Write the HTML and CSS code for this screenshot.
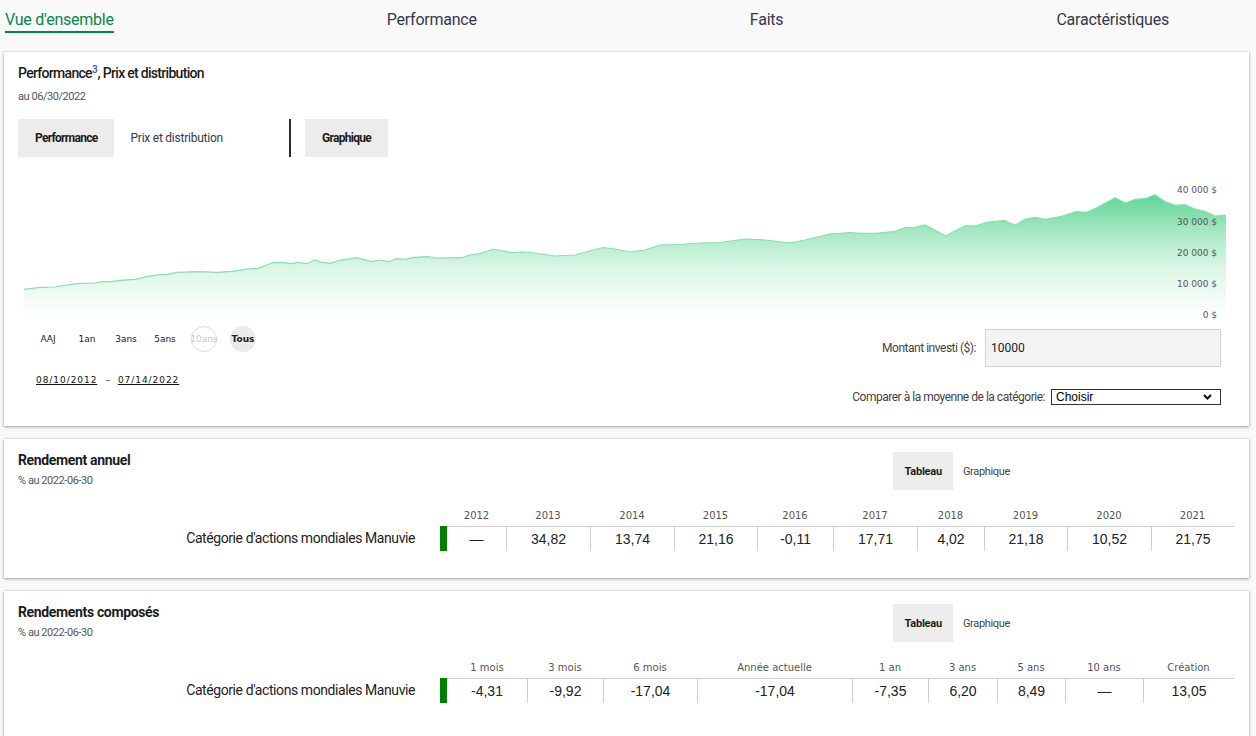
FILE: index.html
```html
<!DOCTYPE html>
<html lang="fr">
<head>
<meta charset="utf-8">
<title>Vue d'ensemble</title>
<link rel="stylesheet" href="styles.css">
</head>
<body>
<nav class="topnav">
  <a class="nav-item active" href="#">Vue d'ensemble</a>
  <a class="nav-item" href="#">Performance</a>
  <a class="nav-item" href="#">Faits</a>
  <a class="nav-item" href="#">Caractéristiques</a>
</nav>

<main class="cards">
  <section class="card perf-card">
    <h2 class="card-title medium">Performance<sup class="note">3</sup>, Prix et distribution</h2>
    <p class="card-sub first">au 06/30/2022</p>

    <div class="tab-row">
      <div class="seg">
        <button class="seg-btn active">Performance</button>
        <button class="seg-btn">Prix et distribution</button>
      </div>
      <span class="tab-divider"></span>
      <button class="seg-btn active">Graphique</button>
    </div>

    <svg class="chart" width="1216" height="162" viewBox="18 160 1216 162">
      <defs>
        <linearGradient id="fillg" gradientUnits="userSpaceOnUse" x1="0" y1="195" x2="0" y2="316">
          <stop offset="0" stop-color="#5fd496"/>
          <stop offset="0.3" stop-color="#a6e8c3"/>
          <stop offset="0.6" stop-color="#dbf6e6"/>
          <stop offset="1" stop-color="#ffffff"/>
        </linearGradient>
      </defs>
      <path class="area" fill="url(#fillg)" d="M24,289.3 L40,287.3 L55,287 L76.7,283.7 L95,283 L103,281.7 L111.7,281.7 L120,280.3 L135,279.3 L148,276.3 L160,274.7 L168,274.3 L176.7,272.3 L200,271.7 L216.7,272.3 L233,271.3 L245,269.3 L258,268.3 L266.7,265 L273,262.7 L281.7,262.3 L291.7,263.7 L298,262.3 L306.7,263.7 L315,260 L321.7,262.3 L330,263.3 L340,260.3 L356,257.7 L371.7,261.7 L380,260 L388.3,261.7 L396.7,258.7 L405,259.3 L413.3,257.3 L428.3,256.7 L436.7,258 L461.7,257.7 L470,255 L480,253.7 L493.3,249 L503.3,251 L511.7,252.7 L522.7,252 L535,253 L555,256 L575,255 L590,251 L603,247.5 L615,249 L630,252 L645,250 L660,245 L680,244.5 L700,243 L720,242.5 L745,239 L765,240 L790,243 L805,240 L830,234 L850,232.5 L860,233.3 L876.7,233.3 L895,231.3 L905,227.7 L915,227.3 L925,225 L945.7,236 L956.7,230 L966,225.7 L975,226 L986,222.7 L995,221.3 L1005,220.7 L1015,225.3 L1025,219.3 L1035,217.3 L1045,219.3 L1060,216.7 L1076,211.7 L1086.7,212.3 L1096.7,207.7 L1115,197.7 L1125.7,203 L1135,199.3 L1145,198.7 L1155,194.7 L1165.7,202 L1175.7,205.3 L1185,204.7 L1195,209 L1205,211.3 L1215,216 L1226,215 L1226,320 L24,320 Z"/>
      <path class="line" fill="none" stroke="#86e0b0" stroke-width="1.2" d="M24,289.3 L40,287.3 L55,287 L76.7,283.7 L95,283 L103,281.7 L111.7,281.7 L120,280.3 L135,279.3 L148,276.3 L160,274.7 L168,274.3 L176.7,272.3 L200,271.7 L216.7,272.3 L233,271.3 L245,269.3 L258,268.3 L266.7,265 L273,262.7 L281.7,262.3 L291.7,263.7 L298,262.3 L306.7,263.7 L315,260 L321.7,262.3 L330,263.3 L340,260.3 L356,257.7 L371.7,261.7 L380,260 L388.3,261.7 L396.7,258.7 L405,259.3 L413.3,257.3 L428.3,256.7 L436.7,258 L461.7,257.7 L470,255 L480,253.7 L493.3,249 L503.3,251 L511.7,252.7 L522.7,252 L535,253 L555,256 L575,255 L590,251 L603,247.5 L615,249 L630,252 L645,250 L660,245 L680,244.5 L700,243 L720,242.5 L745,239 L765,240 L790,243 L805,240 L830,234 L850,232.5 L860,233.3 L876.7,233.3 L895,231.3 L905,227.7 L915,227.3 L925,225 L945.7,236 L956.7,230 L966,225.7 L975,226 L986,222.7 L995,221.3 L1005,220.7 L1015,225.3 L1025,219.3 L1035,217.3 L1045,219.3 L1060,216.7 L1076,211.7 L1086.7,212.3 L1096.7,207.7 L1115,197.7 L1125.7,203 L1135,199.3 L1145,198.7 L1155,194.7 L1165.7,202 L1175.7,205.3 L1185,204.7 L1195,209 L1205,211.3 L1215,216 L1226,215"/>
      <g class="axis">
        <text x="1217" y="193">40 000 $</text>
        <text x="1217" y="225">30 000 $</text>
        <text x="1217" y="256">20 000 $</text>
        <text x="1217" y="287">10 000 $</text>
        <text x="1217" y="318">0 $</text>
      </g>
    </svg>

    <div class="controls">
      <div class="range">
        <div class="range-btns">
          <button class="rbtn">AAJ</button>
          <button class="rbtn">1an</button>
          <button class="rbtn">3ans</button>
          <button class="rbtn">5ans</button>
          <button class="rbtn disabled">10ans</button>
          <button class="rbtn selected">Tous</button>
        </div>
        <div class="dates">
          <span class="date">08/10/2012</span>
          <span class="dash">–</span>
          <span class="date">07/14/2022</span>
        </div>
      </div>
      <div class="calc">
        <div class="field-row">
          <label class="field-label" for="amt">Montant investi ($):</label>
          <input id="amt" class="amount" type="text" value="10000">
        </div>
        <div class="field-row tight">
          <label class="field-label" for="cmp">Comparer à la moyenne de la catégorie:</label>
          <span class="select-wrap">
            <select id="cmp" class="select"><option>Choisir</option></select>
            <svg class="chev" width="9" height="6" viewBox="0 0 9 6"><path d="M1 1 L4.5 4.5 L8 1" fill="none" stroke="#111" stroke-width="2"/></svg>
          </span>
        </div>
      </div>
    </div>
  </section>

  <section class="card">
    <div class="card-head">
      <div class="head-text">
        <h2 class="card-title">Rendement annuel</h2>
        <p class="card-sub">% au 2022-06-30</p>
      </div>
      <div class="toggle">
        <button class="seg-btn small active">Tableau</button>
        <button class="seg-btn small">Graphique</button>
      </div>
    </div>
    <div class="ret-table annual">
      <span></span><span></span>
      <span class="th">2012</span><span class="th">2013</span><span class="th">2014</span><span class="th">2015</span><span class="th">2016</span><span class="th">2017</span><span class="th">2018</span><span class="th">2019</span><span class="th">2020</span><span class="th">2021</span>
      <span class="row-label">Catégorie d'actions mondiales Manuvie</span><span class="bar"></span>
      <span class="td first">—</span><span class="td">34,82</span><span class="td">13,74</span><span class="td">21,16</span><span class="td">-0,11</span><span class="td">17,71</span><span class="td">4,02</span><span class="td">21,18</span><span class="td">10,52</span><span class="td">21,75</span>
    </div>
  </section>

  <section class="card last">
    <div class="card-head">
      <div class="head-text">
        <h2 class="card-title">Rendements composés</h2>
        <p class="card-sub">% au 2022-06-30</p>
      </div>
      <div class="toggle">
        <button class="seg-btn small active">Tableau</button>
        <button class="seg-btn small">Graphique</button>
      </div>
    </div>
    <div class="ret-table compound">
      <span></span><span></span>
      <span class="th">1 mois</span><span class="th">3 mois</span><span class="th">6 mois</span><span class="th">Année actuelle</span><span class="th">1 an</span><span class="th">3 ans</span><span class="th">5 ans</span><span class="th">10 ans</span><span class="th">Création</span>
      <span class="row-label">Catégorie d'actions mondiales Manuvie</span><span class="bar"></span>
      <span class="td first">-4,31</span><span class="td">-9,92</span><span class="td">-17,04</span><span class="td">-17,04</span><span class="td">-7,35</span><span class="td">6,20</span><span class="td">8,49</span><span class="td">—</span><span class="td">13,05</span>
    </div>
  </section>
</main>
</body>
</html>
```

FILE: styles.css
```css
* {
  box-sizing: border-box;
  margin: 0;
  padding: 0;
}

body {
  width: 1256px;
  background: #f9f9f9;
  font-family: Roboto, "Liberation Sans", sans-serif;
  color: #222;
}

/* top navigation */
.topnav {
  display: flex;
  justify-content: space-between;
  width: 1169px;
  padding: 11px 0 0 5px;
}

.nav-item {
  font-size: 16px;
  line-height: 18px;
  letter-spacing: -0.015em;
  color: #34384b;
  text-decoration: none;
  padding-bottom: 2px;
  border-bottom: 2px solid transparent;
}

.nav-item.active {
  color: #06874e;
  border-bottom-color: #00874a;
}

/* cards */
.cards {
  display: flex;
  flex-direction: column;
  gap: 13px;
  width: 1245px;
  margin: 19px 0 0 4px;
}

.card {
  background: #fff;
  box-shadow: 0 1px 3px rgba(0, 0, 0, 0.35), 0 0 1px rgba(0, 0, 0, 0.25);
  padding: 12px 15px 27px 14px;
}

.perf-card {
  padding-bottom: 21px;
}

.card.last {
  padding-bottom: 40px;
}

.card-title {
  font-size: 14px;
  line-height: 18px;
  font-weight: 700;
  letter-spacing: -0.025em;
  color: #1c1c1c;
}

.card-title.medium {
  font-weight: 500;
  letter-spacing: -0.05em;
}

.note {
  font-size: 10px;
  line-height: 0;
  vertical-align: 5px;
  color: #3b4cf0;
  letter-spacing: 0;
}

.card-sub {
  margin-top: 5px;
  font-size: 11px;
  line-height: 14px;
  letter-spacing: -0.04em;
  color: #555;
}

.card-sub.first {
  margin-top: 8px;
}

/* tabs */
.tab-row {
  display: flex;
  height: 38px;
  margin-top: 15px;
}

.seg {
  display: flex;
  width: 271px;
}

.seg-btn {
  height: 38px;
  padding: 0 16px;
  border: 0;
  background: transparent;
  font-family: Roboto, "Liberation Sans", sans-serif;
  font-size: 12px;
  letter-spacing: -0.02em;
  color: #34384b;
  cursor: pointer;
}

.seg-btn.active {
  padding: 0 17px;
  background: #ececec;
  font-weight: 700;
  letter-spacing: -0.06em;
  color: #1c1c1c;
}

.tab-divider {
  width: 2px;
  margin-right: 14px;
  background: #282b3e;
}

/* chart */
.chart {
  display: block;
  margin-top: 3px;
}

.axis text {
  font-family: "DejaVu Sans", Verdana, sans-serif;
  font-size: 9px;
  fill: #555;
  text-anchor: end;
}

/* controls under chart */
.controls {
  display: flex;
  justify-content: space-between;
  margin-top: 4px;
}

.range-btns {
  display: flex;
  gap: 13px;
  margin-left: 17px;
}

.rbtn {
  width: 26px;
  height: 26px;
  border: 1px solid transparent;
  border-radius: 50%;
  background: transparent;
  font-family: "DejaVu Sans", Verdana, sans-serif;
  font-size: 9px;
  color: #222;
  white-space: nowrap;
  display: flex;
  align-items: center;
  justify-content: center;
  overflow: visible;
}

.rbtn.disabled {
  border-color: #dcdcdc;
  color: #c8c8c8;
}

.rbtn.selected {
  background: #ebebeb;
  font-weight: 700;
}

.dates {
  display: flex;
  margin: 22px 0 0 18px;
  font-family: "DejaVu Sans", Verdana, sans-serif;
  font-size: 9px;
  line-height: 12px;
  color: #111;
}

.date {
  text-decoration: underline;
  letter-spacing: 0.95px;
}

.dash {
  margin: 0 8px 0 8px;
}

.calc {
  display: flex;
  flex-direction: column;
  align-items: flex-end;
  gap: 22px;
  margin: 3px 13px 0 0;
}

.field-row {
  display: flex;
  align-items: center;
  gap: 9px;
}

.field-row.tight {
  gap: 6px;
}

.field-label {
  font-size: 12px;
  letter-spacing: -0.04em;
  color: #444;
}

.amount {
  width: 236px;
  height: 38px;
  padding-left: 5px;
  border: 1px solid #d4d4d4;
  background: #f3f3f3;
  font-family: Roboto, "Liberation Sans", sans-serif;
  font-size: 12px;
  color: #222;
  outline: none;
}

.select-wrap {
  position: relative;
  display: block;
}

.select {
  display: block;
  width: 170px;
  height: 16px;
  padding: 0 0 0 4px;
  border: 1px solid #333;
  border-radius: 0;
  background: #fff;
  appearance: none;
  -webkit-appearance: none;
  font-family: "Liberation Sans", Arial, sans-serif;
  font-size: 12px;
  line-height: 14px;
  color: #000;
}

.chev {
  position: absolute;
  right: 9px;
  top: 5px;
  pointer-events: none;
}

/* return tables */
.card-head {
  display: flex;
  align-items: flex-start;
}

.head-text {
  flex: 1;
}

.toggle {
  display: flex;
  margin: 1px 214px 0 0;
}

.seg-btn.small {
  font-size: 11px;
  padding: 0 10px;
  letter-spacing: -0.03em;
  color: #444;
}

.seg-btn.small.active {
  padding: 0 11px;
  letter-spacing: -0.02em;
  color: #1c1c1c;
}

.ret-table {
  display: grid;
  margin-top: 16px;
}

.ret-table.annual {
  grid-template-columns: 1fr 7px 59px 84px 84px 83px 76px 84px 67px 83px 84px 83px;
}

.ret-table.compound {
  grid-template-columns: 1fr 7px 80px 76px 94px 155px 76px 69px 68px 78px 91px;
}

.th {
  height: 20px;
  line-height: 20px;
  text-align: center;
  font-family: "DejaVu Sans", Verdana, sans-serif;
  font-size: 10px;
  color: #555;
  white-space: nowrap;
}

.row-label {
  padding-right: 25px;
  text-align: right;
  font-size: 14px;
  line-height: 25px;
  letter-spacing: -0.03em;
  color: #222;
}

.bar {
  background: #008000;
}

.td {
  height: 25px;
  line-height: 24px;
  border-top: 1px solid #cfcfcf;
  border-left: 1px solid #cfcfcf;
  text-align: center;
  font-family: "Liberation Sans", Arial, sans-serif;
  font-size: 14px;
  color: #222;
}

.td.first {
  border-left: 0;
}
```
